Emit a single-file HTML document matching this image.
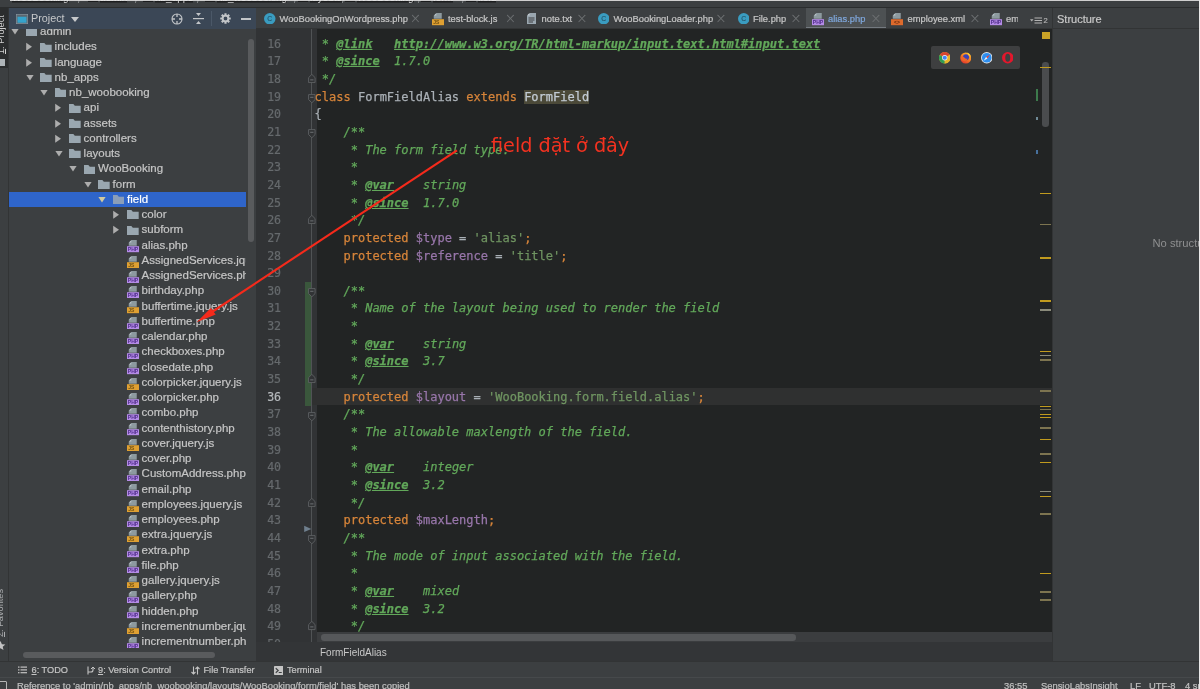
<!DOCTYPE html><html><head><meta charset="utf-8"><title>alias.php</title><style>
*{box-sizing:border-box;margin:0;padding:0}
html,body{width:1200px;height:689px;overflow:hidden;background:#3c3f41}
body{position:relative;font-family:"Liberation Sans", "DejaVu Sans", sans-serif;color:#bbbbbb;font-size:11px}
.abs{position:absolute}
#topcrumb{left:0;top:0;width:1200px;height:8px;overflow:hidden;border-bottom:1px solid #2b2d2e;will-change:transform}
#topcrumb .tc{position:absolute;top:-7.6px;left:0;white-space:nowrap;font-size:10px;color:#d0d0d0;line-height:12px}
#topcrumb .tc .w{background:linear-gradient(#1c1d1e,#1c1d1e) 0 8.6px / 100% 1.5px no-repeat}
#topwhite{left:10px;top:0;width:1190px;height:1.2px;background:#e9e9e9;opacity:.85}
#rightwhite{left:1198.8px;top:0;width:1.2px;height:689px;background:#e9e9e9}
#lstrip{left:0;top:8px;width:9px;height:653px;border-right:1px solid #323435;overflow:hidden;will-change:transform}
#lsel{left:0;top:8px;width:8px;height:60px;background:#2b2d2e}
.vtxt{position:absolute;white-space:nowrap;transform-origin:0 0;transform:rotate(-90deg);font-size:9.2px;line-height:10.5px;color:#c0c0c0}
#pheadbg{left:9px;top:8px;width:247px;height:21px;background:#3b4756}
#phead{left:9px;top:8px;width:247px;height:21px;will-change:transform}
#phead .ttl{position:absolute;left:22px;top:0;line-height:21.5px;font-size:10.8px;color:#c6c8ca}
#tree{left:9px;top:29px;width:243px;height:619px;overflow:hidden;will-change:transform}
.row{-webkit-text-stroke:0.2px currentColor;position:absolute;left:0;width:237px;height:15.25px;line-height:15.25px;white-space:nowrap;font-size:11.5px;color:#c6c6c6;overflow:hidden}
.row.sel{background:#2f65ca;color:#fff}
.row .lbl{position:absolute;top:0}
.arr{position:absolute;top:0;width:10px;height:15.23px}
.fold svg,.row svg{display:block}
.fold{position:absolute;top:3.2px;width:11.7px;height:9px}
.ficon{position:absolute;top:2.6px;width:12px;height:12.4px}
#tscroll{left:246px;top:29px;width:10px;height:619px}
#tscroll i{position:absolute;left:1.6px;top:9.5px;width:6px;height:203px;background:#595b5d;border-radius:3px}
#thscroll{left:9px;top:648px;width:247px;height:13px}
#thscroll i{position:absolute;left:14px;top:3.5px;width:192px;height:6px;background:#595b5d;border-radius:3px}
#tabs{left:256px;top:8px;width:796px;height:21px;border-bottom:1px solid #323435;overflow:hidden;will-change:transform}
.tab{-webkit-text-stroke:0.2px currentColor;position:absolute;top:0;height:21px;line-height:22px;font-size:9.35px;color:#c6c6c6;white-space:nowrap}
.tab .x{position:absolute;top:0;color:#6f7274;font-size:10px}
#gutterbg{left:256px;top:29px;width:60.5px;height:613px;background:#313335}
#gutter{left:256px;top:29px;width:60.5px;height:613px;overflow:hidden;will-change:transform}
#foldline{left:311.3px;top:29px;width:1px;height:613px;background:#505355}
#editorbg{left:316.5px;top:29px;width:735.5px;height:603px;background:#222424}
#editor{left:312px;top:29px;width:740px;height:603px;overflow:hidden;will-change:transform}
.ln{-webkit-text-stroke:0.2px currentColor;position:absolute;right:35.9px;width:30px;text-align:right;font-family:"DejaVu Sans Mono", "Liberation Mono", monospace;font-size:11.6px;letter-spacing:-0.35px;color:#666a6d;height:17.67px;line-height:17.67px}
.cl{position:absolute;left:2.6px;-webkit-text-stroke:0.25px currentColor;white-space:pre;font-family:"DejaVu Sans Mono", "Liberation Mono", monospace;font-size:12px;height:17.67px;line-height:17.67px;color:#aab0b6}
.k{color:#d6843a}.v{color:#9876aa}.s{color:#6f9461}.c{color:#62a85a;font-style:italic}
.t{color:#62a85a;font-style:italic;font-weight:bold;text-decoration:underline}
.u{color:#62a85a;font-style:italic;font-weight:bold;text-decoration:underline}
.hl{background:#4b4938;color:#c2cbd4}
#curline{left:0;width:740px;height:17.67px;background:#2f3030}
#stripe{left:1040px;top:29px;width:12px;height:603px}
#hscroll{left:317px;top:632px;width:735px;height:10.5px;background:#3b3d3f}
#hscroll i{position:absolute;left:3.8px;top:2.2px;width:475px;height:6.6px;background:#56585a;border-radius:3.3px}
#gutbot{left:256px;top:632px;width:56px;height:10px;background:#313335}
#crumbbg{left:256px;top:642px;width:796px;height:19px;background:#333537}
#crumb{left:256px;top:642px;width:796px;height:19px;will-change:transform}
#crumb span{position:absolute;left:64px;top:0.6px;line-height:20px;font-size:10px;color:#c8c8c8}
#struct{left:1052px;top:8px;width:148px;height:653px;border-left:1px solid #323435;will-change:transform}
#struct .h{position:absolute;left:0;top:0;width:148px;height:21px;border-bottom:1px solid #323435;line-height:23px;font-size:11px;color:#c8c8c8;padding-left:4px;-webkit-text-stroke:0.2px currentColor}
#struct .n{position:absolute;left:99.5px;top:229px;white-space:nowrap;font-size:11.2px;color:#8e8f90}
#bstrip{left:0;top:661px;width:1200px;height:17px;border-top:1px solid #323435;will-change:transform}
#bstrip span{-webkit-text-stroke:0.2px currentColor;position:absolute;top:0;line-height:16px;font-size:9.2px;color:#c4c4c4;white-space:nowrap}
#status{left:0;top:677.3px;width:1200px;height:12px;border-top:1px solid #46494b;overflow:hidden;will-change:transform}
#status span{-webkit-text-stroke:0.2px currentColor;position:absolute;top:1.8px;line-height:12px;font-size:9.4px;color:#c0c0c0;white-space:nowrap}
#bpop{left:931px;top:46px;width:89px;height:23px;background:#3e3f40;border-radius:2px}
#anno{will-change:transform;left:490.5px;top:132px;font-family:"DejaVu Sans","Liberation Sans",sans-serif;font-size:19.2px;line-height:28px;color:#f33220;white-space:nowrap}
</style></head><body>
<div class="abs" id="topcrumb"><div class="tc">
<span class="abs w" style="left:12px;top:0">WooBooking</span>
<span class="abs w" style="left:100px;top:0">admin</span>
<span class="abs w" style="left:155px;top:0">nb_apps</span>
<span class="abs w" style="left:217px;top:0">nb_woobooking</span>
<span class="abs w" style="left:310px;top:0">layouts</span>
<span class="abs w" style="left:357px;top:0">WooBooking</span>
<span class="abs w" style="left:433px;top:0">form</span>
<span class="abs w" style="left:478px;top:0">field</span>
<span class="abs" style="left:78px;top:1.8px;color:#8a8d8f">/</span>
<span class="abs" style="left:135px;top:1.8px;color:#8a8d8f">/</span>
<span class="abs" style="left:197px;top:1.8px;color:#8a8d8f">/</span>
<span class="abs" style="left:294px;top:1.8px;color:#8a8d8f">/</span>
<span class="abs" style="left:342px;top:1.8px;color:#8a8d8f">/</span>
<span class="abs" style="left:418px;top:1.8px;color:#8a8d8f">/</span>
<span class="abs" style="left:462px;top:1.8px;color:#8a8d8f">/</span>
</div>
<div class="abs" style="left:88px;top:-5.6px;width:10px;height:8px;background:#1b1c1d"></div>
<div class="abs" style="left:143px;top:-5.6px;width:10px;height:8px;background:#1b1c1d"></div>
<div class="abs" style="left:205px;top:-5.6px;width:10px;height:8px;background:#1b1c1d"></div>
<div class="abs" style="left:298px;top:-5.6px;width:10px;height:8px;background:#1b1c1d"></div>
<div class="abs" style="left:345px;top:-5.6px;width:10px;height:8px;background:#1b1c1d"></div>
<div class="abs" style="left:421px;top:-5.6px;width:10px;height:8px;background:#1b1c1d"></div>
<div class="abs" style="left:466px;top:-5.6px;width:10px;height:8px;background:#1b1c1d"></div>
<div class="abs" id="topwhite"></div></div>
<div class="abs" id="lsel"></div><div class="abs" id="lstrip"><div class="vtxt" style="left:-3.6px;top:45.5px;color:#d0d0d0"><u>1</u>: Project</div><div class="abs" style="left:-1px;top:51px;width:6px;height:6.5px;background:#aeb4b8"></div><div class="vtxt" style="left:-5px;top:629px;color:#a9abad"><u>2</u>: Favorites</div><svg class="abs" style="left:-5px;top:632px" width="11" height="11" viewBox="0 0 24 24"><path fill="#c3c3c3" d="M12 2l3 7 7.5.6-5.7 4.9 1.8 7.3L12 17.8 5.4 21.8l1.8-7.3L1.5 9.6 9 9z"/></svg></div>
<div class="abs" id="pheadbg"></div>
<div class="abs" id="phead">
<svg class="abs" style="left:7px;top:5.5px" width="12" height="10" viewBox="0 0 24 20"><rect x="0.5" y="0.5" width="23" height="19" fill="#5b6770" stroke="#8d99a3" stroke-width="1.4"/><rect x="3" y="5.5" width="18" height="12" fill="#35a3cc"/></svg>
<div class="ttl">Project</div>
<svg class="abs" style="left:62px;top:9px" width="8" height="5" viewBox="0 0 8 5"><path d="M0 0h8L4 5z" fill="#c6c8ca"/></svg>
<svg class="abs" style="left:162px;top:4.5px" width="12" height="12" viewBox="0 0 24 24" fill="none" stroke="#c2c5c8" stroke-width="2.2"><circle cx="12" cy="12" r="10"/><path d="M12 2v6M12 16v6M2 12h6M16 12h6" stroke-width="2.6"/></svg>
<svg class="abs" style="left:184px;top:4px" width="11" height="13" viewBox="0 0 22 26"><path d="M0 12h22v2.4H0z" fill="#c2c5c8"/><path d="M6 2h10l-5 6z M6 24h10l-5-6z" fill="#c2c5c8"/></svg>
<div class="abs" style="left:202px;top:3px;width:1px;height:15px;background:#4b5868"></div>
<svg class="abs" style="left:210.5px;top:5px" width="11" height="11" viewBox="0 0 24 24"><g fill="#c2c5c8"><rect x="9.6" y="0.5" width="4.8" height="6.5" rx="0.8" transform="rotate(0 12 12)"/><rect x="9.6" y="0.5" width="4.8" height="6.5" rx="0.8" transform="rotate(45 12 12)"/><rect x="9.6" y="0.5" width="4.8" height="6.5" rx="0.8" transform="rotate(90 12 12)"/><rect x="9.6" y="0.5" width="4.8" height="6.5" rx="0.8" transform="rotate(135 12 12)"/><rect x="9.6" y="0.5" width="4.8" height="6.5" rx="0.8" transform="rotate(180 12 12)"/><rect x="9.6" y="0.5" width="4.8" height="6.5" rx="0.8" transform="rotate(225 12 12)"/><rect x="9.6" y="0.5" width="4.8" height="6.5" rx="0.8" transform="rotate(270 12 12)"/><rect x="9.6" y="0.5" width="4.8" height="6.5" rx="0.8" transform="rotate(315 12 12)"/></g><circle cx="12" cy="12" r="6.2" fill="none" stroke="#c2c5c8" stroke-width="4"/></svg>
<div class="abs" style="left:231.5px;top:10px;width:10px;height:1.6px;background:#c2c5c8"></div>
</div>
<div class="abs" id="tree">
<div class="row" style="top:-4.77px">
<svg class="arr" style="left:0.3px" viewBox="0 0 10 15.23"><path d="M2.4 5h7.2L6 10.4z" fill="#adadad"/></svg>
<div class="fold" style="left:16.50px"><svg viewBox="0 0 23 18" width="100%" height="100%" preserveAspectRatio="none"><path d="M0 0h8.5l3 3.6H23V18H0z" fill="#9aa7b0"/></svg></div>
<span class="lbl" style="left:31.10px">admin</span>
</div>
<div class="row" style="top:10.48px">
<svg class="arr" style="left:14.8px" viewBox="0 0 10 15.23"><path d="M2.2 3.8v8L8 7.8z" fill="#adadad"/></svg>
<div class="fold" style="left:31.00px"><svg viewBox="0 0 23 18" width="100%" height="100%" preserveAspectRatio="none"><path d="M0 0h8.5l3 3.6H23V18H0z" fill="#9aa7b0"/></svg></div>
<span class="lbl" style="left:45.60px">includes</span>
</div>
<div class="row" style="top:25.73px">
<svg class="arr" style="left:14.8px" viewBox="0 0 10 15.23"><path d="M2.2 3.8v8L8 7.8z" fill="#adadad"/></svg>
<div class="fold" style="left:31.00px"><svg viewBox="0 0 23 18" width="100%" height="100%" preserveAspectRatio="none"><path d="M0 0h8.5l3 3.6H23V18H0z" fill="#9aa7b0"/></svg></div>
<span class="lbl" style="left:45.60px">language</span>
</div>
<div class="row" style="top:40.98px">
<svg class="arr" style="left:14.8px" viewBox="0 0 10 15.23"><path d="M2.4 5h7.2L6 10.4z" fill="#adadad"/></svg>
<div class="fold" style="left:31.00px"><svg viewBox="0 0 23 18" width="100%" height="100%" preserveAspectRatio="none"><path d="M0 0h8.5l3 3.6H23V18H0z" fill="#9aa7b0"/></svg></div>
<span class="lbl" style="left:45.60px">nb_apps</span>
</div>
<div class="row" style="top:56.23px">
<svg class="arr" style="left:29.3px" viewBox="0 0 10 15.23"><path d="M2.4 5h7.2L6 10.4z" fill="#adadad"/></svg>
<div class="fold" style="left:45.50px"><svg viewBox="0 0 23 18" width="100%" height="100%" preserveAspectRatio="none"><path d="M0 0h8.5l3 3.6H23V18H0z" fill="#9aa7b0"/></svg></div>
<span class="lbl" style="left:60.10px">nb_woobooking</span>
</div>
<div class="row" style="top:71.47px">
<svg class="arr" style="left:43.8px" viewBox="0 0 10 15.23"><path d="M2.2 3.8v8L8 7.8z" fill="#adadad"/></svg>
<div class="fold" style="left:60.00px"><svg viewBox="0 0 23 18" width="100%" height="100%" preserveAspectRatio="none"><path d="M0 0h8.5l3 3.6H23V18H0z" fill="#9aa7b0"/></svg></div>
<span class="lbl" style="left:74.60px">api</span>
</div>
<div class="row" style="top:86.72px">
<svg class="arr" style="left:43.8px" viewBox="0 0 10 15.23"><path d="M2.2 3.8v8L8 7.8z" fill="#adadad"/></svg>
<div class="fold" style="left:60.00px"><svg viewBox="0 0 23 18" width="100%" height="100%" preserveAspectRatio="none"><path d="M0 0h8.5l3 3.6H23V18H0z" fill="#9aa7b0"/></svg></div>
<span class="lbl" style="left:74.60px">assets</span>
</div>
<div class="row" style="top:101.97px">
<svg class="arr" style="left:43.8px" viewBox="0 0 10 15.23"><path d="M2.2 3.8v8L8 7.8z" fill="#adadad"/></svg>
<div class="fold" style="left:60.00px"><svg viewBox="0 0 23 18" width="100%" height="100%" preserveAspectRatio="none"><path d="M0 0h8.5l3 3.6H23V18H0z" fill="#9aa7b0"/></svg></div>
<span class="lbl" style="left:74.60px">controllers</span>
</div>
<div class="row" style="top:117.22px">
<svg class="arr" style="left:43.8px" viewBox="0 0 10 15.23"><path d="M2.4 5h7.2L6 10.4z" fill="#adadad"/></svg>
<div class="fold" style="left:60.00px"><svg viewBox="0 0 23 18" width="100%" height="100%" preserveAspectRatio="none"><path d="M0 0h8.5l3 3.6H23V18H0z" fill="#9aa7b0"/></svg></div>
<span class="lbl" style="left:74.60px">layouts</span>
</div>
<div class="row" style="top:132.47px">
<svg class="arr" style="left:58.3px" viewBox="0 0 10 15.23"><path d="M2.4 5h7.2L6 10.4z" fill="#adadad"/></svg>
<div class="fold" style="left:74.50px"><svg viewBox="0 0 23 18" width="100%" height="100%" preserveAspectRatio="none"><path d="M0 0h8.5l3 3.6H23V18H0z" fill="#9aa7b0"/></svg></div>
<span class="lbl" style="left:89.10px">WooBooking</span>
</div>
<div class="row" style="top:147.72px">
<svg class="arr" style="left:72.8px" viewBox="0 0 10 15.23"><path d="M2.4 5h7.2L6 10.4z" fill="#adadad"/></svg>
<div class="fold" style="left:89.00px"><svg viewBox="0 0 23 18" width="100%" height="100%" preserveAspectRatio="none"><path d="M0 0h8.5l3 3.6H23V18H0z" fill="#9aa7b0"/></svg></div>
<span class="lbl" style="left:103.60px">form</span>
</div>
<div class="row sel" style="top:162.97px">
<svg class="arr" style="left:87.3px" viewBox="0 0 10 15.23"><path d="M2.4 5h7.2L6 10.4z" fill="#d0c9a0"/></svg>
<div class="fold" style="left:103.50px"><svg viewBox="0 0 23 18" width="100%" height="100%" preserveAspectRatio="none"><path d="M0 0h8.5l3 3.6H23V18H0z" fill="#8b9eb8"/></svg></div>
<span class="lbl" style="left:118.10px">field</span>
</div>
<div class="row" style="top:178.22px">
<svg class="arr" style="left:101.8px" viewBox="0 0 10 15.23"><path d="M2.2 3.8v8L8 7.8z" fill="#adadad"/></svg>
<div class="fold" style="left:118.00px"><svg viewBox="0 0 23 18" width="100%" height="100%" preserveAspectRatio="none"><path d="M0 0h8.5l3 3.6H23V18H0z" fill="#9aa7b0"/></svg></div>
<span class="lbl" style="left:132.60px">color</span>
</div>
<div class="row" style="top:193.47px">
<svg class="arr" style="left:101.8px" viewBox="0 0 10 15.23"><path d="M2.2 3.8v8L8 7.8z" fill="#adadad"/></svg>
<div class="fold" style="left:118.00px"><svg viewBox="0 0 23 18" width="100%" height="100%" preserveAspectRatio="none"><path d="M0 0h8.5l3 3.6H23V18H0z" fill="#9aa7b0"/></svg></div>
<span class="lbl" style="left:132.60px">subform</span>
</div>
<div class="row" style="top:208.72px">
<svg class="ficon" style="left:118.0px" viewBox="0 0 24 24.800"><path d="M9 0H19.5V11.5H3.500V5.500z" fill="#8d9a9f"/><path d="M8.600 0.300V5.200H3.800z" fill="#bcc7cb"/><rect x="0" y="12.400" width="24" height="12" fill="#b48be6"/><text x="12" y="22.600" font-size="11" font-family="Liberation Sans, sans-serif" font-weight="bold" fill="#4f2c8a" text-anchor="middle" textLength="21" lengthAdjust="spacingAndGlyphs">PHP</text></svg>
<span class="lbl" style="left:132.60px">alias.php</span>
</div>
<div class="row" style="top:223.97px">
<svg class="ficon" style="left:118.0px" viewBox="0 0 24 24.800"><path d="M9 0H19.5V11.5H3.500V5.500z" fill="#8d9a9f"/><path d="M8.600 0.300V5.200H3.800z" fill="#bcc7cb"/><rect x="0" y="12.400" width="24" height="12" fill="#dfa032"/><text x="8.500" y="22.400" font-size="10" font-family="Liberation Sans, sans-serif" font-weight="bold" fill="#6e4f12" text-anchor="middle">JS</text></svg>
<span class="lbl" style="left:132.60px">AssignedServices.jquery.js</span>
</div>
<div class="row" style="top:239.22px">
<svg class="ficon" style="left:118.0px" viewBox="0 0 24 24.800"><path d="M9 0H19.5V11.5H3.500V5.500z" fill="#8d9a9f"/><path d="M8.600 0.300V5.200H3.800z" fill="#bcc7cb"/><rect x="0" y="12.400" width="24" height="12" fill="#b48be6"/><text x="12" y="22.600" font-size="11" font-family="Liberation Sans, sans-serif" font-weight="bold" fill="#4f2c8a" text-anchor="middle" textLength="21" lengthAdjust="spacingAndGlyphs">PHP</text></svg>
<span class="lbl" style="left:132.60px">AssignedServices.php</span>
</div>
<div class="row" style="top:254.47px">
<svg class="ficon" style="left:118.0px" viewBox="0 0 24 24.800"><path d="M9 0H19.5V11.5H3.500V5.500z" fill="#8d9a9f"/><path d="M8.600 0.300V5.200H3.800z" fill="#bcc7cb"/><rect x="0" y="12.400" width="24" height="12" fill="#b48be6"/><text x="12" y="22.600" font-size="11" font-family="Liberation Sans, sans-serif" font-weight="bold" fill="#4f2c8a" text-anchor="middle" textLength="21" lengthAdjust="spacingAndGlyphs">PHP</text></svg>
<span class="lbl" style="left:132.60px">birthday.php</span>
</div>
<div class="row" style="top:269.73px">
<svg class="ficon" style="left:118.0px" viewBox="0 0 24 24.800"><path d="M9 0H19.5V11.5H3.500V5.500z" fill="#8d9a9f"/><path d="M8.600 0.300V5.200H3.800z" fill="#bcc7cb"/><rect x="0" y="12.400" width="24" height="12" fill="#dfa032"/><text x="8.500" y="22.400" font-size="10" font-family="Liberation Sans, sans-serif" font-weight="bold" fill="#6e4f12" text-anchor="middle">JS</text></svg>
<span class="lbl" style="left:132.60px">buffertime.jquery.js</span>
</div>
<div class="row" style="top:284.98px">
<svg class="ficon" style="left:118.0px" viewBox="0 0 24 24.800"><path d="M9 0H19.5V11.5H3.500V5.500z" fill="#8d9a9f"/><path d="M8.600 0.300V5.200H3.800z" fill="#bcc7cb"/><rect x="0" y="12.400" width="24" height="12" fill="#b48be6"/><text x="12" y="22.600" font-size="11" font-family="Liberation Sans, sans-serif" font-weight="bold" fill="#4f2c8a" text-anchor="middle" textLength="21" lengthAdjust="spacingAndGlyphs">PHP</text></svg>
<span class="lbl" style="left:132.60px">buffertime.php</span>
</div>
<div class="row" style="top:300.23px">
<svg class="ficon" style="left:118.0px" viewBox="0 0 24 24.800"><path d="M9 0H19.5V11.5H3.500V5.500z" fill="#8d9a9f"/><path d="M8.600 0.300V5.200H3.800z" fill="#bcc7cb"/><rect x="0" y="12.400" width="24" height="12" fill="#b48be6"/><text x="12" y="22.600" font-size="11" font-family="Liberation Sans, sans-serif" font-weight="bold" fill="#4f2c8a" text-anchor="middle" textLength="21" lengthAdjust="spacingAndGlyphs">PHP</text></svg>
<span class="lbl" style="left:132.60px">calendar.php</span>
</div>
<div class="row" style="top:315.48px">
<svg class="ficon" style="left:118.0px" viewBox="0 0 24 24.800"><path d="M9 0H19.5V11.5H3.500V5.500z" fill="#8d9a9f"/><path d="M8.600 0.300V5.200H3.800z" fill="#bcc7cb"/><rect x="0" y="12.400" width="24" height="12" fill="#b48be6"/><text x="12" y="22.600" font-size="11" font-family="Liberation Sans, sans-serif" font-weight="bold" fill="#4f2c8a" text-anchor="middle" textLength="21" lengthAdjust="spacingAndGlyphs">PHP</text></svg>
<span class="lbl" style="left:132.60px">checkboxes.php</span>
</div>
<div class="row" style="top:330.73px">
<svg class="ficon" style="left:118.0px" viewBox="0 0 24 24.800"><path d="M9 0H19.5V11.5H3.500V5.500z" fill="#8d9a9f"/><path d="M8.600 0.300V5.200H3.800z" fill="#bcc7cb"/><rect x="0" y="12.400" width="24" height="12" fill="#b48be6"/><text x="12" y="22.600" font-size="11" font-family="Liberation Sans, sans-serif" font-weight="bold" fill="#4f2c8a" text-anchor="middle" textLength="21" lengthAdjust="spacingAndGlyphs">PHP</text></svg>
<span class="lbl" style="left:132.60px">closedate.php</span>
</div>
<div class="row" style="top:345.98px">
<svg class="ficon" style="left:118.0px" viewBox="0 0 24 24.800"><path d="M9 0H19.5V11.5H3.500V5.500z" fill="#8d9a9f"/><path d="M8.600 0.300V5.200H3.800z" fill="#bcc7cb"/><rect x="0" y="12.400" width="24" height="12" fill="#dfa032"/><text x="8.500" y="22.400" font-size="10" font-family="Liberation Sans, sans-serif" font-weight="bold" fill="#6e4f12" text-anchor="middle">JS</text></svg>
<span class="lbl" style="left:132.60px">colorpicker.jquery.js</span>
</div>
<div class="row" style="top:361.23px">
<svg class="ficon" style="left:118.0px" viewBox="0 0 24 24.800"><path d="M9 0H19.5V11.5H3.500V5.500z" fill="#8d9a9f"/><path d="M8.600 0.300V5.200H3.800z" fill="#bcc7cb"/><rect x="0" y="12.400" width="24" height="12" fill="#b48be6"/><text x="12" y="22.600" font-size="11" font-family="Liberation Sans, sans-serif" font-weight="bold" fill="#4f2c8a" text-anchor="middle" textLength="21" lengthAdjust="spacingAndGlyphs">PHP</text></svg>
<span class="lbl" style="left:132.60px">colorpicker.php</span>
</div>
<div class="row" style="top:376.48px">
<svg class="ficon" style="left:118.0px" viewBox="0 0 24 24.800"><path d="M9 0H19.5V11.5H3.500V5.500z" fill="#8d9a9f"/><path d="M8.600 0.300V5.200H3.800z" fill="#bcc7cb"/><rect x="0" y="12.400" width="24" height="12" fill="#b48be6"/><text x="12" y="22.600" font-size="11" font-family="Liberation Sans, sans-serif" font-weight="bold" fill="#4f2c8a" text-anchor="middle" textLength="21" lengthAdjust="spacingAndGlyphs">PHP</text></svg>
<span class="lbl" style="left:132.60px">combo.php</span>
</div>
<div class="row" style="top:391.73px">
<svg class="ficon" style="left:118.0px" viewBox="0 0 24 24.800"><path d="M9 0H19.5V11.5H3.500V5.500z" fill="#8d9a9f"/><path d="M8.600 0.300V5.200H3.800z" fill="#bcc7cb"/><rect x="0" y="12.400" width="24" height="12" fill="#b48be6"/><text x="12" y="22.600" font-size="11" font-family="Liberation Sans, sans-serif" font-weight="bold" fill="#4f2c8a" text-anchor="middle" textLength="21" lengthAdjust="spacingAndGlyphs">PHP</text></svg>
<span class="lbl" style="left:132.60px">contenthistory.php</span>
</div>
<div class="row" style="top:406.98px">
<svg class="ficon" style="left:118.0px" viewBox="0 0 24 24.800"><path d="M9 0H19.5V11.5H3.500V5.500z" fill="#8d9a9f"/><path d="M8.600 0.300V5.200H3.800z" fill="#bcc7cb"/><rect x="0" y="12.400" width="24" height="12" fill="#dfa032"/><text x="8.500" y="22.400" font-size="10" font-family="Liberation Sans, sans-serif" font-weight="bold" fill="#6e4f12" text-anchor="middle">JS</text></svg>
<span class="lbl" style="left:132.60px">cover.jquery.js</span>
</div>
<div class="row" style="top:422.23px">
<svg class="ficon" style="left:118.0px" viewBox="0 0 24 24.800"><path d="M9 0H19.5V11.5H3.500V5.500z" fill="#8d9a9f"/><path d="M8.600 0.300V5.200H3.800z" fill="#bcc7cb"/><rect x="0" y="12.400" width="24" height="12" fill="#b48be6"/><text x="12" y="22.600" font-size="11" font-family="Liberation Sans, sans-serif" font-weight="bold" fill="#4f2c8a" text-anchor="middle" textLength="21" lengthAdjust="spacingAndGlyphs">PHP</text></svg>
<span class="lbl" style="left:132.60px">cover.php</span>
</div>
<div class="row" style="top:437.48px">
<svg class="ficon" style="left:118.0px" viewBox="0 0 24 24.800"><path d="M9 0H19.5V11.5H3.500V5.500z" fill="#8d9a9f"/><path d="M8.600 0.300V5.200H3.800z" fill="#bcc7cb"/><rect x="0" y="12.400" width="24" height="12" fill="#b48be6"/><text x="12" y="22.600" font-size="11" font-family="Liberation Sans, sans-serif" font-weight="bold" fill="#4f2c8a" text-anchor="middle" textLength="21" lengthAdjust="spacingAndGlyphs">PHP</text></svg>
<span class="lbl" style="left:132.60px">CustomAddress.php</span>
</div>
<div class="row" style="top:452.73px">
<svg class="ficon" style="left:118.0px" viewBox="0 0 24 24.800"><path d="M9 0H19.5V11.5H3.500V5.500z" fill="#8d9a9f"/><path d="M8.600 0.300V5.200H3.800z" fill="#bcc7cb"/><rect x="0" y="12.400" width="24" height="12" fill="#b48be6"/><text x="12" y="22.600" font-size="11" font-family="Liberation Sans, sans-serif" font-weight="bold" fill="#4f2c8a" text-anchor="middle" textLength="21" lengthAdjust="spacingAndGlyphs">PHP</text></svg>
<span class="lbl" style="left:132.60px">email.php</span>
</div>
<div class="row" style="top:467.98px">
<svg class="ficon" style="left:118.0px" viewBox="0 0 24 24.800"><path d="M9 0H19.5V11.5H3.500V5.500z" fill="#8d9a9f"/><path d="M8.600 0.300V5.200H3.800z" fill="#bcc7cb"/><rect x="0" y="12.400" width="24" height="12" fill="#dfa032"/><text x="8.500" y="22.400" font-size="10" font-family="Liberation Sans, sans-serif" font-weight="bold" fill="#6e4f12" text-anchor="middle">JS</text></svg>
<span class="lbl" style="left:132.60px">employees.jquery.js</span>
</div>
<div class="row" style="top:483.23px">
<svg class="ficon" style="left:118.0px" viewBox="0 0 24 24.800"><path d="M9 0H19.5V11.5H3.500V5.500z" fill="#8d9a9f"/><path d="M8.600 0.300V5.200H3.800z" fill="#bcc7cb"/><rect x="0" y="12.400" width="24" height="12" fill="#b48be6"/><text x="12" y="22.600" font-size="11" font-family="Liberation Sans, sans-serif" font-weight="bold" fill="#4f2c8a" text-anchor="middle" textLength="21" lengthAdjust="spacingAndGlyphs">PHP</text></svg>
<span class="lbl" style="left:132.60px">employees.php</span>
</div>
<div class="row" style="top:498.48px">
<svg class="ficon" style="left:118.0px" viewBox="0 0 24 24.800"><path d="M9 0H19.5V11.5H3.500V5.500z" fill="#8d9a9f"/><path d="M8.600 0.300V5.200H3.800z" fill="#bcc7cb"/><rect x="0" y="12.400" width="24" height="12" fill="#dfa032"/><text x="8.500" y="22.400" font-size="10" font-family="Liberation Sans, sans-serif" font-weight="bold" fill="#6e4f12" text-anchor="middle">JS</text></svg>
<span class="lbl" style="left:132.60px">extra.jquery.js</span>
</div>
<div class="row" style="top:513.73px">
<svg class="ficon" style="left:118.0px" viewBox="0 0 24 24.800"><path d="M9 0H19.5V11.5H3.500V5.500z" fill="#8d9a9f"/><path d="M8.600 0.300V5.200H3.800z" fill="#bcc7cb"/><rect x="0" y="12.400" width="24" height="12" fill="#b48be6"/><text x="12" y="22.600" font-size="11" font-family="Liberation Sans, sans-serif" font-weight="bold" fill="#4f2c8a" text-anchor="middle" textLength="21" lengthAdjust="spacingAndGlyphs">PHP</text></svg>
<span class="lbl" style="left:132.60px">extra.php</span>
</div>
<div class="row" style="top:528.98px">
<svg class="ficon" style="left:118.0px" viewBox="0 0 24 24.800"><path d="M9 0H19.5V11.5H3.500V5.500z" fill="#8d9a9f"/><path d="M8.600 0.300V5.200H3.800z" fill="#bcc7cb"/><rect x="0" y="12.400" width="24" height="12" fill="#b48be6"/><text x="12" y="22.600" font-size="11" font-family="Liberation Sans, sans-serif" font-weight="bold" fill="#4f2c8a" text-anchor="middle" textLength="21" lengthAdjust="spacingAndGlyphs">PHP</text></svg>
<span class="lbl" style="left:132.60px">file.php</span>
</div>
<div class="row" style="top:544.23px">
<svg class="ficon" style="left:118.0px" viewBox="0 0 24 24.800"><path d="M9 0H19.5V11.5H3.500V5.500z" fill="#8d9a9f"/><path d="M8.600 0.300V5.200H3.800z" fill="#bcc7cb"/><rect x="0" y="12.400" width="24" height="12" fill="#dfa032"/><text x="8.500" y="22.400" font-size="10" font-family="Liberation Sans, sans-serif" font-weight="bold" fill="#6e4f12" text-anchor="middle">JS</text></svg>
<span class="lbl" style="left:132.60px">gallery.jquery.js</span>
</div>
<div class="row" style="top:559.48px">
<svg class="ficon" style="left:118.0px" viewBox="0 0 24 24.800"><path d="M9 0H19.5V11.5H3.500V5.500z" fill="#8d9a9f"/><path d="M8.600 0.300V5.200H3.800z" fill="#bcc7cb"/><rect x="0" y="12.400" width="24" height="12" fill="#b48be6"/><text x="12" y="22.600" font-size="11" font-family="Liberation Sans, sans-serif" font-weight="bold" fill="#4f2c8a" text-anchor="middle" textLength="21" lengthAdjust="spacingAndGlyphs">PHP</text></svg>
<span class="lbl" style="left:132.60px">gallery.php</span>
</div>
<div class="row" style="top:574.73px">
<svg class="ficon" style="left:118.0px" viewBox="0 0 24 24.800"><path d="M9 0H19.5V11.5H3.500V5.500z" fill="#8d9a9f"/><path d="M8.600 0.300V5.200H3.800z" fill="#bcc7cb"/><rect x="0" y="12.400" width="24" height="12" fill="#b48be6"/><text x="12" y="22.600" font-size="11" font-family="Liberation Sans, sans-serif" font-weight="bold" fill="#4f2c8a" text-anchor="middle" textLength="21" lengthAdjust="spacingAndGlyphs">PHP</text></svg>
<span class="lbl" style="left:132.60px">hidden.php</span>
</div>
<div class="row" style="top:589.98px">
<svg class="ficon" style="left:118.0px" viewBox="0 0 24 24.800"><path d="M9 0H19.5V11.5H3.500V5.500z" fill="#8d9a9f"/><path d="M8.600 0.300V5.200H3.800z" fill="#bcc7cb"/><rect x="0" y="12.400" width="24" height="12" fill="#dfa032"/><text x="8.500" y="22.400" font-size="10" font-family="Liberation Sans, sans-serif" font-weight="bold" fill="#6e4f12" text-anchor="middle">JS</text></svg>
<span class="lbl" style="left:132.60px">incrementnumber.jquery.js</span>
</div>
<div class="row" style="top:605.23px">
<svg class="ficon" style="left:118.0px" viewBox="0 0 24 24.800"><path d="M9 0H19.5V11.5H3.500V5.500z" fill="#8d9a9f"/><path d="M8.600 0.300V5.200H3.800z" fill="#bcc7cb"/><rect x="0" y="12.400" width="24" height="12" fill="#b48be6"/><text x="12" y="22.600" font-size="11" font-family="Liberation Sans, sans-serif" font-weight="bold" fill="#4f2c8a" text-anchor="middle" textLength="21" lengthAdjust="spacingAndGlyphs">PHP</text></svg>
<span class="lbl" style="left:132.60px">incrementnumber.php</span>
</div>
</div>
<div class="abs" id="tscroll"><i></i></div>
<div class="abs" id="thscroll"><i></i></div>
<div class="abs" id="tabs">
<svg class="abs" style="left:8px;top:4.8px" width="11.5" height="11.5" viewBox="0 0 20 20"><circle cx="10" cy="10" r="10" fill="#3a9cc0"/><text x="10" y="14.3" font-size="12" font-family="Liberation Sans, sans-serif" fill="#1d3f4f" text-anchor="middle">C</text></svg>
<span class="tab" style="left:23.5px;">WooBookingOnWordpress.php</span>
<span class="tab" style="left:153.8px;color:#6e7173;font-size:13.5px;line-height:20.5px;font-family:'DejaVu Sans',sans-serif;font-weight:200">×</span>
<svg class="abs" style="left:176px;top:5.300px" width="12" height="12.400" viewBox="0 0 24 24.800"><path d="M9 0H19.5V11.5H3.500V5.500z" fill="#8d9a9f"/><path d="M8.600 0.300V5.200H3.800z" fill="#bcc7cb"/><rect x="0" y="12.400" width="24" height="12" fill="#dfa032"/><text x="8.500" y="22.400" font-size="10" font-family="Liberation Sans, sans-serif" font-weight="bold" fill="#6e4f12" text-anchor="middle">JS</text></svg>
<span class="tab" style="left:192px;">test-block.js</span>
<span class="tab" style="left:248.8px;color:#6e7173;font-size:13.5px;line-height:20.5px;font-family:'DejaVu Sans',sans-serif;font-weight:200">×</span>
<svg class="abs" style="left:271px;top:4.5px" width="9" height="11.5" viewBox="0 0 18 23"><path d="M6 0h12v23H0V6z" fill="#9aa7b0"/><path d="M5 0v5H0z" fill="#c8d0d6"/><path d="M3 9h12v1.8H3zM3 13h12v1.8H3zM3 17h9v1.8H3z" fill="#3c3f41"/></svg>
<span class="tab" style="left:285.5px;">note.txt</span>
<span class="tab" style="left:320.3px;color:#6e7173;font-size:13.5px;line-height:20.5px;font-family:'DejaVu Sans',sans-serif;font-weight:200">×</span>
<svg class="abs" style="left:341.5px;top:4.8px" width="11.5" height="11.5" viewBox="0 0 20 20"><circle cx="10" cy="10" r="10" fill="#3a9cc0"/><text x="10" y="14.3" font-size="12" font-family="Liberation Sans, sans-serif" fill="#1d3f4f" text-anchor="middle">C</text></svg>
<span class="tab" style="left:357.5px;">WooBookingLoader.php</span>
<span class="tab" style="left:459.3px;color:#6e7173;font-size:13.5px;line-height:20.5px;font-family:'DejaVu Sans',sans-serif;font-weight:200">×</span>
<svg class="abs" style="left:481.5px;top:4.8px" width="11.5" height="11.5" viewBox="0 0 20 20"><circle cx="10" cy="10" r="10" fill="#3a9cc0"/><text x="10" y="14.3" font-size="12" font-family="Liberation Sans, sans-serif" fill="#1d3f4f" text-anchor="middle">C</text></svg>
<span class="tab" style="left:497px;">File.php</span>
<span class="tab" style="left:534.3px;color:#6e7173;font-size:13.5px;line-height:20.5px;font-family:'DejaVu Sans',sans-serif;font-weight:200">×</span>
<div class="abs" style="left:550px;top:0;width:79.5px;height:21px;background:#4d5153"></div>
<div class="abs" style="left:550px;top:18.6px;width:79.5px;height:3px;background:#747a80"></div>
<svg class="abs" style="left:556px;top:5.300px" width="12" height="12.400" viewBox="0 0 24 24.800"><path d="M9 0H19.5V11.5H3.500V5.500z" fill="#8d9a9f"/><path d="M8.600 0.300V5.200H3.800z" fill="#bcc7cb"/><rect x="0" y="12.400" width="24" height="12" fill="#b48be6"/><text x="12" y="22.600" font-size="11" font-family="Liberation Sans, sans-serif" font-weight="bold" fill="#4f2c8a" text-anchor="middle" textLength="21" lengthAdjust="spacingAndGlyphs">PHP</text></svg>
<span class="tab" style="left:572px;color:#7fa7dc;">alias.php</span>
<span class="tab" style="left:614.3px;color:#6e7173;font-size:13.5px;line-height:20.5px;font-family:'DejaVu Sans',sans-serif;font-weight:200">×</span>
<svg class="abs" style="left:635px;top:5.300px" width="12" height="12.400" viewBox="0 0 24 24.800"><path d="M9 0H19.5V11.5H3.500V5.500z" fill="#8d9a9f"/><path d="M8.600 0.300V5.200H3.800z" fill="#bcc7cb"/><rect x="0" y="12.400" width="24" height="12" fill="#dd6a2c"/><text x="12" y="22.200" font-size="10" font-family="Liberation Sans, sans-serif" font-weight="bold" fill="#5a230a" text-anchor="middle">&lt;&gt;</text></svg>
<span class="tab" style="left:651.5px;">employee.xml</span>
<span class="tab" style="left:713.3px;color:#6e7173;font-size:13.5px;line-height:20.5px;font-family:'DejaVu Sans',sans-serif;font-weight:200">×</span>
<svg class="abs" style="left:734px;top:5.300px" width="12" height="12.400" viewBox="0 0 24 24.800"><path d="M9 0H19.5V11.5H3.500V5.500z" fill="#8d9a9f"/><path d="M8.600 0.300V5.200H3.800z" fill="#bcc7cb"/><rect x="0" y="12.400" width="24" height="12" fill="#b48be6"/><text x="12" y="22.600" font-size="11" font-family="Liberation Sans, sans-serif" font-weight="bold" fill="#4f2c8a" text-anchor="middle" textLength="21" lengthAdjust="spacingAndGlyphs">PHP</text></svg>
<span class="tab" style="left:750px;width:12px;overflow:hidden;">em</span>
<svg class="abs" style="left:774px;top:7.6px" width="14" height="9" viewBox="0 0 28 18"><path d="M0 6.5h7L3.5 11z" fill="#b4b4b4"/><path d="M9 3h15v2.2H9zM9 8h15v2.2H9zM9 13h15v2.2H9z" fill="#b4b4b4"/></svg>
<span class="tab" style="left:787.5px;font-size:7.5px;color:#b0b0b0;line-height:25.5px">2</span>
</div>
<div class="abs" id="gutterbg"></div>
<div class="abs" id="gutter">
<div class="abs" style="left:48.8px;top:252.64px;width:6.4px;height:124.02px;background:#3a573c"></div>
<div class="ln" style="top:7.00px;">16</div>
<div class="ln" style="top:24.00px;">17</div>
<div class="ln" style="top:42.00px;">18</div>
<div class="ln" style="top:60.00px;">19</div>
<div class="ln" style="top:77.00px;">20</div>
<div class="ln" style="top:95.00px;">21</div>
<div class="ln" style="top:113.00px;">22</div>
<div class="ln" style="top:130.00px;">23</div>
<div class="ln" style="top:148.00px;">24</div>
<div class="ln" style="top:166.00px;">25</div>
<div class="ln" style="top:183.00px;">26</div>
<div class="ln" style="top:201.00px;">27</div>
<div class="ln" style="top:219.00px;">28</div>
<div class="ln" style="top:236.00px;">29</div>
<div class="ln" style="top:254.00px;">30</div>
<div class="ln" style="top:271.00px;">31</div>
<div class="ln" style="top:289.00px;">32</div>
<div class="ln" style="top:307.00px;">33</div>
<div class="ln" style="top:324.00px;">34</div>
<div class="ln" style="top:342.00px;">35</div>
<div class="ln" style="top:360.00px;color:#b4b8bb;">36</div>
<div class="ln" style="top:377.00px;">37</div>
<div class="ln" style="top:395.00px;">38</div>
<div class="ln" style="top:413.00px;">39</div>
<div class="ln" style="top:430.00px;">40</div>
<div class="ln" style="top:448.00px;">41</div>
<div class="ln" style="top:466.00px;">42</div>
<div class="ln" style="top:483.00px;">43</div>
<div class="ln" style="top:501.00px;">44</div>
<div class="ln" style="top:519.00px;">45</div>
<div class="ln" style="top:536.00px;">46</div>
<div class="ln" style="top:554.00px;">47</div>
<div class="ln" style="top:572.00px;">48</div>
<div class="ln" style="top:589.00px;">49</div>
<div class="ln" style="top:607.00px;">50</div>
</div>
<div class="abs" id="foldline"></div>
<div class="abs" id="editorbg"></div>
<div class="abs" id="editor">
<div class="abs" id="curline" style="top:358.80px"></div>
<div class="cl" style="top:-11.00px"></div>
<div class="cl" style="top:7.00px"><span class="c"> * </span><span class="t">@link</span><span class="c">   </span><span class="u">http://www.w3.org/TR/html-markup/input.text.html#input.text</span></div>
<div class="cl" style="top:24.00px"><span class="c"> * </span><span class="t">@since</span><span class="c">  1.7.0</span></div>
<div class="cl" style="top:42.00px"><span class="c"> */</span></div>
<div class="cl" style="top:60.00px"><span class="k">class </span>FormFieldAlias <span class="k">extends </span><span class="hl">FormField</span></div>
<div class="cl" style="top:77.00px">{</div>
<div class="cl" style="top:95.00px"><span class="c">    /**</span></div>
<div class="cl" style="top:113.00px"><span class="c">     * The form field type.</span></div>
<div class="cl" style="top:130.00px"><span class="c">     *</span></div>
<div class="cl" style="top:148.00px"><span class="c">     * </span><span class="t">@var</span><span class="c">    string</span></div>
<div class="cl" style="top:166.00px"><span class="c">     * </span><span class="t">@since</span><span class="c">  1.7.0</span></div>
<div class="cl" style="top:183.00px"><span class="c">     */</span></div>
<div class="cl" style="top:201.00px">    <span class="k">protected </span><span class="v">$type</span> = <span class="s">'alias'</span><span class="k">;</span></div>
<div class="cl" style="top:219.00px">    <span class="k">protected </span><span class="v">$reference</span> = <span class="s">'title'</span><span class="k">;</span></div>
<div class="cl" style="top:236.00px"></div>
<div class="cl" style="top:254.00px"><span class="c">    /**</span></div>
<div class="cl" style="top:271.00px"><span class="c">     * Name of the layout being used to render the field</span></div>
<div class="cl" style="top:289.00px"><span class="c">     *</span></div>
<div class="cl" style="top:307.00px"><span class="c">     * </span><span class="t">@var</span><span class="c">    string</span></div>
<div class="cl" style="top:324.00px"><span class="c">     * </span><span class="t">@since</span><span class="c">  3.7</span></div>
<div class="cl" style="top:342.00px"><span class="c">     */</span></div>
<div class="cl" style="top:360.00px">    <span class="k">protected </span><span class="v">$layout</span> = <span class="s">'WooBooking.form.field.alias'</span><span class="k">;</span></div>
<div class="cl" style="top:377.00px"><span class="c">    /**</span></div>
<div class="cl" style="top:395.00px"><span class="c">     * The allowable maxlength of the field.</span></div>
<div class="cl" style="top:413.00px"><span class="c">     *</span></div>
<div class="cl" style="top:430.00px"><span class="c">     * </span><span class="t">@var</span><span class="c">    integer</span></div>
<div class="cl" style="top:448.00px"><span class="c">     * </span><span class="t">@since</span><span class="c">  3.2</span></div>
<div class="cl" style="top:466.00px"><span class="c">     */</span></div>
<div class="cl" style="top:483.00px">    <span class="k">protected </span><span class="v">$maxLength</span><span class="k">;</span></div>
<div class="cl" style="top:501.00px"><span class="c">    /**</span></div>
<div class="cl" style="top:519.00px"><span class="c">     * The mode of input associated with the field.</span></div>
<div class="cl" style="top:536.00px"><span class="c">     *</span></div>
<div class="cl" style="top:554.00px"><span class="c">     * </span><span class="t">@var</span><span class="c">    mixed</span></div>
<div class="cl" style="top:572.00px"><span class="c">     * </span><span class="t">@since</span><span class="c">  3.2</span></div>
<div class="cl" style="top:589.00px"><span class="c">     */</span></div>
<div class="cl" style="top:607.00px">    <span class="k">protected </span><span class="v">$inputmode</span><span class="k">;</span></div>
</div>
<svg class="abs" style="left:308px;top:74.02px" width="7.7" height="9.2" viewBox="0 0 7.7 9.2"><path d="M0.6 8.6h6.5v-5l-3.25-3.2l-3.25 3.2z" fill="#313335" stroke="#606365" stroke-width="0.9"/><path d="M2.2 5.9h3.3" stroke="#74777a" stroke-width="0.9"/></svg>
<svg class="abs" style="left:308px;top:93.68px" width="7.7" height="9.2" viewBox="0 0 7.7 9.2"><path d="M0.6 0.6h6.5v5l-3.25 3.2l-3.25-3.2z" fill="#313335" stroke="#606365" stroke-width="0.9"/><path d="M2.2 3.3h3.3" stroke="#74777a" stroke-width="0.9"/></svg>
<svg class="abs" style="left:308px;top:129.00px" width="7.7" height="9.2" viewBox="0 0 7.7 9.2"><path d="M0.6 0.6h6.5v5l-3.25 3.2l-3.25-3.2z" fill="#313335" stroke="#606365" stroke-width="0.9"/><path d="M2.2 3.3h3.3" stroke="#74777a" stroke-width="0.9"/></svg>
<svg class="abs" style="left:308px;top:215.30px" width="7.7" height="9.2" viewBox="0 0 7.7 9.2"><path d="M0.6 8.6h6.5v-5l-3.25-3.2l-3.25 3.2z" fill="#313335" stroke="#606365" stroke-width="0.9"/><path d="M2.2 5.9h3.3" stroke="#74777a" stroke-width="0.9"/></svg>
<svg class="abs" style="left:308px;top:287.94px" width="7.7" height="9.2" viewBox="0 0 7.7 9.2"><path d="M0.6 0.6h6.5v5l-3.25 3.2l-3.25-3.2z" fill="#313335" stroke="#606365" stroke-width="0.9"/><path d="M2.2 3.3h3.3" stroke="#74777a" stroke-width="0.9"/></svg>
<svg class="abs" style="left:308px;top:374.24px" width="7.7" height="9.2" viewBox="0 0 7.7 9.2"><path d="M0.6 8.6h6.5v-5l-3.25-3.2l-3.25 3.2z" fill="#313335" stroke="#606365" stroke-width="0.9"/><path d="M2.2 5.9h3.3" stroke="#74777a" stroke-width="0.9"/></svg>
<svg class="abs" style="left:308px;top:411.56px" width="7.7" height="9.2" viewBox="0 0 7.7 9.2"><path d="M0.6 0.6h6.5v5l-3.25 3.2l-3.25-3.2z" fill="#313335" stroke="#606365" stroke-width="0.9"/><path d="M2.2 3.3h3.3" stroke="#74777a" stroke-width="0.9"/></svg>
<svg class="abs" style="left:308px;top:497.86px" width="7.7" height="9.2" viewBox="0 0 7.7 9.2"><path d="M0.6 8.6h6.5v-5l-3.25-3.2l-3.25 3.2z" fill="#313335" stroke="#606365" stroke-width="0.9"/><path d="M2.2 5.9h3.3" stroke="#74777a" stroke-width="0.9"/></svg>
<svg class="abs" style="left:308px;top:535.18px" width="7.7" height="9.2" viewBox="0 0 7.7 9.2"><path d="M0.6 0.6h6.5v5l-3.25 3.2l-3.25-3.2z" fill="#313335" stroke="#606365" stroke-width="0.9"/><path d="M2.2 3.3h3.3" stroke="#74777a" stroke-width="0.9"/></svg>
<svg class="abs" style="left:308px;top:621.48px" width="7.7" height="9.2" viewBox="0 0 7.7 9.2"><path d="M0.6 8.6h6.5v-5l-3.25-3.2l-3.25 3.2z" fill="#313335" stroke="#606365" stroke-width="0.9"/><path d="M2.2 5.9h3.3" stroke="#74777a" stroke-width="0.9"/></svg>
<svg class="abs" style="left:304px;top:525.3px" width="8" height="8" viewBox="0 0 8 8"><path d="M0.2 0.8v6.2L7.3 3.9z" fill="#6f7f8e"/></svg>
<div class="abs" id="stripe"></div>
<div class="abs" style="left:1041.5px;top:31.7px;width:8px;height:7.6px;background:#c9a227"></div>
<div class="abs" style="left:1042.3px;top:61.7px;width:6.4px;height:65.6px;background:#4a4c4e;border-radius:3.2px"></div>
<div class="abs" style="left:1040px;top:66.5px;width:10.8px;height:1.5px;background:#c09a1e"></div>
<div class="abs" style="left:1036.3px;top:89.0px;width:1.7px;height:12px;background:#3d7a4c"></div>
<div class="abs" style="left:1036.3px;top:117.0px;width:1.7px;height:3.3px;background:#6f8a96"></div>
<div class="abs" style="left:1036.3px;top:149.7px;width:1.7px;height:4.6px;background:#47709c"></div>
<div class="abs" style="left:1040px;top:192.9px;width:10.8px;height:1.5px;background:#c09a1e"></div>
<div class="abs" style="left:1040px;top:223.6px;width:10.8px;height:1.5px;background:#7d7450"></div>
<div class="abs" style="left:1040px;top:257.2px;width:10.8px;height:1.5px;background:#c09a1e"></div>
<div class="abs" style="left:1040px;top:300.2px;width:10.8px;height:1.5px;background:#c09a1e"></div>
<div class="abs" style="left:1040px;top:308.7px;width:10.8px;height:2.0px;background:#8a8a7a"></div>
<div class="abs" style="left:1040px;top:350.8px;width:10.8px;height:1.5px;background:#c09a1e"></div>
<div class="abs" style="left:1040px;top:354.8px;width:10.8px;height:1.5px;background:#8a8a7a"></div>
<div class="abs" style="left:1040px;top:359.4px;width:10.8px;height:1.5px;background:#7d7450"></div>
<div class="abs" style="left:1040px;top:390.2px;width:10.8px;height:1.5px;background:#7d7450"></div>
<div class="abs" style="left:1040px;top:405.9px;width:10.8px;height:1.5px;background:#c09a1e"></div>
<div class="abs" style="left:1040px;top:408.8px;width:10.8px;height:1.5px;background:#7d7450"></div>
<div class="abs" style="left:1040px;top:413.9px;width:10.8px;height:1.5px;background:#c09a1e"></div>
<div class="abs" style="left:1040px;top:416.9px;width:10.8px;height:1.5px;background:#c09a1e"></div>
<div class="abs" style="left:1040px;top:427.2px;width:10.8px;height:1.5px;background:#7d7450"></div>
<div class="abs" style="left:1040px;top:438.9px;width:10.8px;height:1.5px;background:#c09a1e"></div>
<div class="abs" style="left:1040px;top:453.4px;width:10.8px;height:1.5px;background:#7d7450"></div>
<div class="abs" style="left:1040px;top:461.6px;width:10.8px;height:1.5px;background:#c09a1e"></div>
<div class="abs" style="left:1040px;top:490.6px;width:10.8px;height:1.5px;background:#8a8a7a"></div>
<div class="abs" style="left:1040px;top:495.9px;width:10.8px;height:1.5px;background:#c09a1e"></div>
<div class="abs" style="left:1040px;top:513.2px;width:10.8px;height:1.5px;background:#7d7450"></div>
<div class="abs" style="left:1040px;top:572.5px;width:10.8px;height:1.5px;background:#c09a1e"></div>
<div class="abs" style="left:1040px;top:591.0px;width:10.8px;height:1.5px;background:#7d7450"></div>
<div class="abs" style="left:1040px;top:599.2px;width:10.8px;height:1.5px;background:#7d7450"></div>
<div class="abs" id="hscroll"><i></i></div>
<div class="abs" id="crumbbg"></div>
<div class="abs" id="crumb"><span>FormFieldAlias</span></div>
<div class="abs" id="struct"><div class="h">Structure</div><div class="n">No structure</div></div>
<div class="abs" id="bpop">
<svg class="abs" style="left:7.5px;top:6px" width="11.5" height="11.5" viewBox="0 0 24 24"><circle cx="12" cy="12" r="12" fill="#e8b52a"/><path d="M12 12L1.6 6A12 12 0 0 1 22.4 6z" fill="#d8452f"/><path d="M12 12L1.6 6A12 12 0 0 0 12 24z" fill="#2f9e55" transform="rotate(0 12 12)"/><path d="M12 12L12 24A12 12 0 0 0 22.4 6z" fill="#e8b52a"/><circle cx="12" cy="12" r="5.6" fill="#f2f2f2"/><circle cx="12" cy="12" r="4.3" fill="#4285f4"/></svg>
<svg class="abs" style="left:28.5px;top:6px" width="11.5" height="11.5" viewBox="0 0 24 24"><defs><linearGradient id="ffg" x1="0.8" y1="0" x2="0.2" y2="1"><stop offset="0" stop-color="#fcc02e"/><stop offset="0.5" stop-color="#f47a23"/><stop offset="1" stop-color="#e1302f"/></linearGradient></defs><circle cx="12" cy="12.5" r="11.5" fill="url(#ffg)"/><circle cx="12.5" cy="11" r="6.3" fill="#3a43b8"/><path d="M2 10c2-1.5 5-1 7 1.5s4 3 6.5 2.5c-1 4-4.5 6-8 5S1 14 2 10z" fill="#f0662a"/><path d="M14 1c4 1 7.500 4.500 8 9-1.500-2-3-3-5-3 1-2-1-4.500-3-6z" fill="#fdd23a"/></svg>
<svg class="abs" style="left:49.5px;top:6px" width="11.5" height="11.5" viewBox="0 0 24 24"><circle cx="12" cy="12" r="12" fill="#dfe3e8"/><circle cx="12" cy="12" r="10" fill="#2e8ff0"/><path d="M18.500 5.500l-5 8-3-3z" fill="#f0413a"/><path d="M5.500 18.500l5-8 3 3z" fill="#f4f6f8"/></svg>
<svg class="abs" style="left:70.5px;top:6px" width="11.5" height="11.5" viewBox="0 0 24 24"><circle cx="12" cy="12" r="12" fill="#e3172c"/><ellipse cx="12" cy="12" rx="5.200" ry="8.600" fill="#3e3f40"/></svg>
</div>
<svg class="abs" style="left:0;top:0" width="1200" height="689" viewBox="0 0 1200 689"><line x1="457" y1="150.3" x2="212" y2="312" stroke="#f52a1b" stroke-width="2.1"/><path d="M196.6 322.2L210.9 307.9L215.7 314.4z" fill="#f52a1b"/></svg>
<div class="abs" id="anno">field đặt ở đây</div>
<div class="abs" id="bstrip">
<svg class="abs" style="left:18px;top:4px" width="9" height="8" viewBox="0 0 18 16" fill="#c4c4c4"><rect x="0" y="1" width="3" height="2.4"/><rect x="5" y="1" width="13" height="2.4"/><rect x="0" y="6.6" width="3" height="2.4"/><rect x="5" y="6.6" width="13" height="2.4"/><rect x="0" y="12.2" width="3" height="2.4"/><rect x="5" y="12.2" width="13" height="2.4"/></svg>
<span style="left:31.5px"><u>6</u>: TODO</span>
<svg class="abs" style="left:85.5px;top:3.5px" width="9" height="9" viewBox="0 0 18 18" fill="none" stroke="#c4c4c4" stroke-width="2.2"><path d="M4 1v16M4 12h6c3 0 4-2 4-4V3"/><path d="M10 6l4-4 4 4" stroke-width="2"/></svg>
<span style="left:98px"><u>9</u>: Version Control</span>
<svg class="abs" style="left:190.5px;top:3.5px" width="9" height="9" viewBox="0 0 18 18" fill="none" stroke="#c4c4c4" stroke-width="2.2"><path d="M5 1v15M1 12l4 4 4-4M13 17V2M9 6l4-4 4 4"/></svg>
<span style="left:203.5px">File Transfer</span>
<svg class="abs" style="left:273.5px;top:3.5px" width="9.5" height="9" viewBox="0 0 19 18"><rect width="19" height="18" rx="1.5" fill="#c4c4c4"/><path d="M3.5 4.5l5 4.5-5 4.5" fill="none" stroke="#3c3f41" stroke-width="2.2"/><rect x="9.5" y="12" width="6" height="2" fill="#3c3f41"/></svg>
<span style="left:287px">Terminal</span>
</div>
<div class="abs" id="status">
<div class="abs" style="left:-1px;top:3px;width:8px;height:9px;border:1.2px solid #b5b5b5;border-radius:1px"></div>
<span style="left:17px">Reference to 'admin/nb_apps/nb_woobooking/layouts/WooBooking/form/field' has been copied</span>
<span style="left:1004px">36:55</span>
<span style="left:1041px">SensioLabsInsight</span>
<span style="left:1130px">LF</span>
<span style="left:1149px">UTF-8</span>
<span style="left:1185px">4 spaces</span>
</div>
<div class="abs" id="rightwhite"></div>
</body></html>
